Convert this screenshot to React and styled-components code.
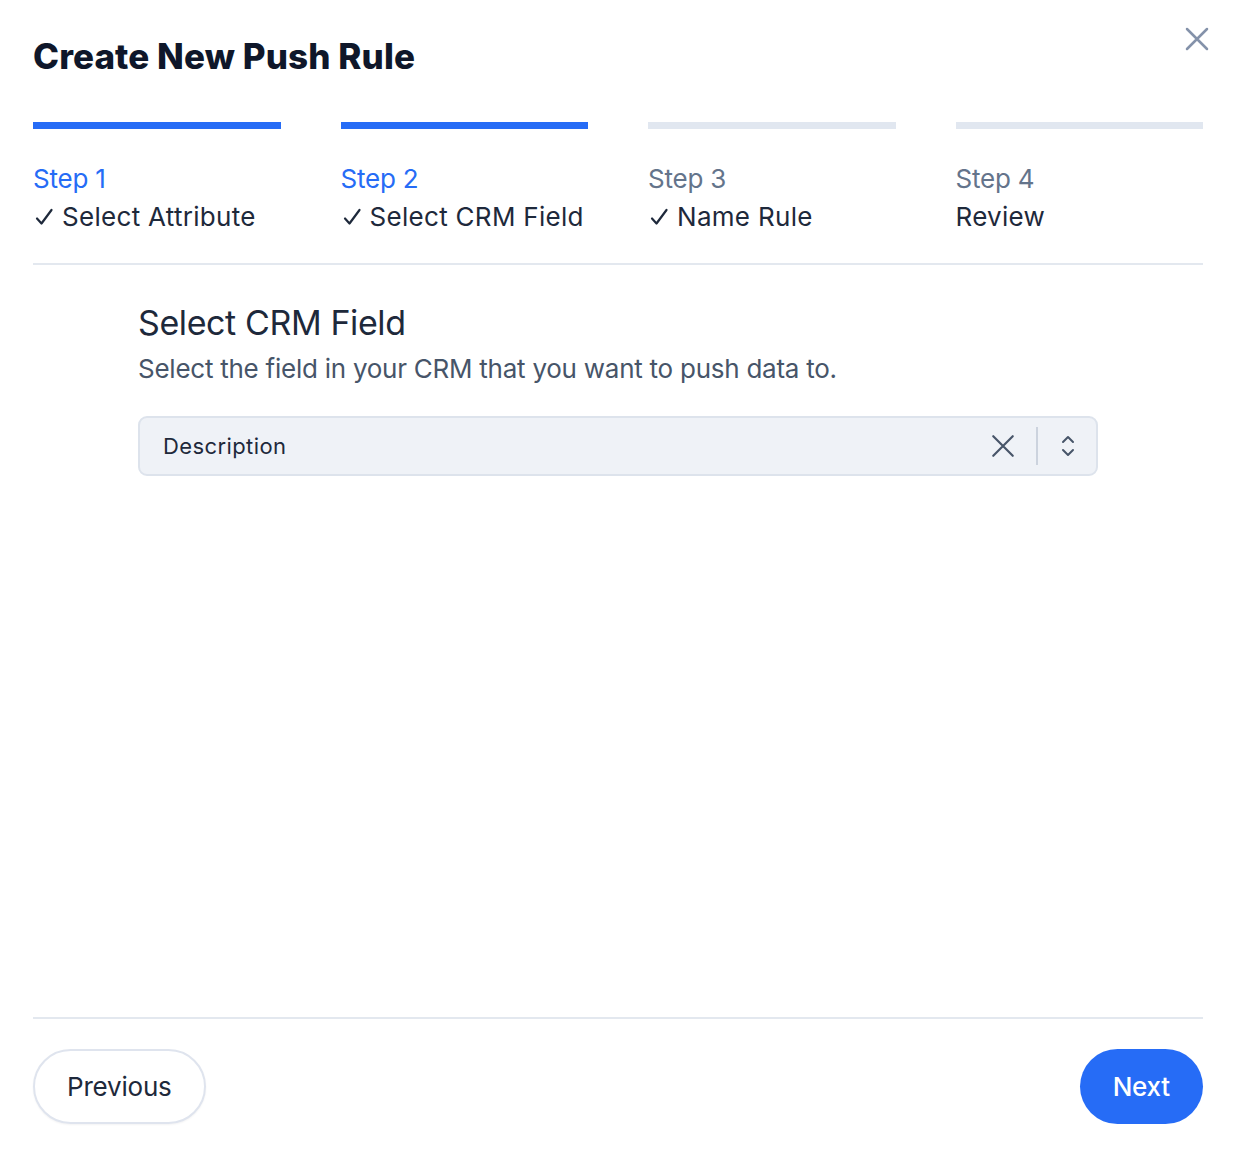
import React from "react";
import styled, { createGlobalStyle } from "styled-components";

const GlobalStyle = createGlobalStyle`
  body {
    margin: 0;
    background: #ffffff;
    font-family: "Inter", "Noto Sans", sans-serif;
    color: #1e293b;
  }
`;

const steps = [
  { label: "Step 1", title: "Select Attribute", done: true, checked: true },
  { label: "Step 2", title: "Select CRM Field", done: true, checked: true },
  { label: "Step 3", title: "Name Rule", done: false, checked: true },
  { label: "Step 4", title: "Review", done: false, checked: false },
];

const CheckIcon = () => (
  <Check width="20" height="20" viewBox="0 0 20 20" fill="none" stroke="#1e293b" strokeLinecap="round" strokeLinejoin="round">
    <path d="M3 11.5l4.5 5L17.5 3" strokeWidth="2.2" />
  </Check>
);

const App = () => {
  return (
    <>
      <GlobalStyle />
      <Modal>
        <Header>
          <Title>Create New Push Rule</Title>
          <CloseButton aria-label="Close">
            <svg width="30" height="30" viewBox="0 0 24 24" fill="none" stroke="#8492aa" strokeWidth="2" strokeLinecap="round">
              <path d="M4 4l16 16M20 4L4 20" />
            </svg>
          </CloseButton>
        </Header>

        <Stepper>
          {steps.map((s, i) => (
            <Step key={i}>
              <Bar active={s.done} />
              <StepLabel active={s.done}>{s.label}</StepLabel>
              <StepTitle>
                {s.checked && <CheckIcon />}
                {s.title}
              </StepTitle>
            </Step>
          ))}
        </Stepper>

        <Divider />

        <Body>
          <SectionTitle>Select CRM Field</SectionTitle>
          <SectionText>Select the field in your CRM that you want to push data to.</SectionText>
          <SelectBox>
            <SelectValue>Description</SelectValue>
            <SelectActions>
              <svg width="26" height="26" viewBox="0 0 24 24" fill="none" stroke="#475569" strokeWidth="2" strokeLinecap="round">
                <path d="M3 3l18 18M21 3L3 21" />
              </svg>
              <Separator />
              <svg width="20" height="26" viewBox="0 0 20 26" fill="none" stroke="#475569" strokeWidth="2" strokeLinecap="round" strokeLinejoin="round">
                <path d="M5 9l5-5 5 5M5 17l5 5 5-5" />
              </svg>
            </SelectActions>
          </SelectBox>
        </Body>

        <Divider />

        <Footer>
          <GhostButton>Previous</GhostButton>
          <PrimaryButton>Next</PrimaryButton>
        </Footer>
      </Modal>
    </>
  );
};

export default App;

const Modal = styled.div`
  width: 1234px;
  height: 1160px;
  box-sizing: border-box;
  padding: 0 31px 0 33px;
  display: flex;
  flex-direction: column;
`;

const Header = styled.div`
  display: flex;
  justify-content: space-between;
  align-items: flex-start;
  padding-top: 34px;
  height: 88px;
  box-sizing: border-box;
`;

const Title = styled.h1`
  margin: 0;
  font-size: 35px;
  font-weight: 800;
  letter-spacing: 0.1px;
  line-height: 44px;
  color: #0f172a;
`;

const CloseButton = styled.button`
  background: none;
  border: none;
  padding: 0;
  margin: -10px -9px 0 0;
  cursor: pointer;
  display: flex;
`;

const Stepper = styled.div`
  display: grid;
  grid-template-columns: repeat(4, 1fr);
  column-gap: 60px;
  padding-top: 34px;
  padding-bottom: 27px;
`;

const Step = styled.div`
  display: flex;
  flex-direction: column;
`;

const Bar = styled.div`
  height: 7px;
  background: ${(p) => (p.active ? "#266cf6" : "#e1e7f0")};
  margin-bottom: 31px;
`;

const StepLabel = styled.div`
  font-size: 26px;
  line-height: 38px;
  letter-spacing: -0.2px;
  color: ${(p) => (p.active ? "#266cf6" : "#64748b")};
`;

const StepTitle = styled.div`
  font-size: 26px;
  line-height: 38px;
  letter-spacing: 0.3px;
  color: #1e293b;
  display: flex;
  align-items: center;
`;

const Check = styled.svg`
  flex-shrink: 0;
  margin: 0 8px 0 1px;
`;

const Divider = styled.div`
  height: 2px;
  background: #e3e8ef;
`;

const Body = styled.div`
  flex: 1;
  padding: 36px 105px 0 105px;
  display: flex;
  flex-direction: column;
`;

const SectionTitle = styled.h2`
  margin: 0;
  font-size: 34px;
  font-weight: 400;
  letter-spacing: -0.4px;
  line-height: 44px;
  color: #1e293b;
`;

const SectionText = styled.p`
  margin: 6px 0 0;
  font-size: 26px;
  letter-spacing: -0.25px;
  line-height: 36px;
  color: #475569;
`;

const SelectBox = styled.div`
  margin-top: 29px;
  width: 960px;
  height: 60px;
  box-sizing: border-box;
  background: #eff2f7;
  border: 2px solid #dde3ec;
  border-radius: 9px;
  display: flex;
  align-items: center;
  justify-content: space-between;
  padding: 0 18px 0 23px;
`;

const SelectValue = styled.span`
  font-size: 22px;
  color: #1e293b;
  letter-spacing: 0.4px;
`;

const SelectActions = styled.div`
  display: flex;
  align-items: center;
  gap: 20px;
`;

const Separator = styled.div`
  width: 2px;
  height: 38px;
  background: #ccd3de;
`;

const Footer = styled.div`
  display: flex;
  justify-content: space-between;
  align-items: center;
  padding: 30px 0 36px;
`;

const GhostButton = styled.button`
  height: 75px;
  padding: 0 32px;
  border-radius: 40px;
  border: 2px solid #dfe4ee;
  background: #ffffff;
  font-family: inherit;
  font-size: 26px;
  letter-spacing: -0.2px;
  color: #1e293b;
  box-shadow: 0 1px 2px rgba(15, 23, 42, 0.05);
  cursor: pointer;
`;

const PrimaryButton = styled.button`
  height: 75px;
  padding: 0 33px;
  border-radius: 40px;
  border: none;
  background: #266cf6;
  font-family: inherit;
  font-size: 26px;
  font-weight: 500;
  letter-spacing: -0.2px;
  color: #ffffff;
  cursor: pointer;
`;
